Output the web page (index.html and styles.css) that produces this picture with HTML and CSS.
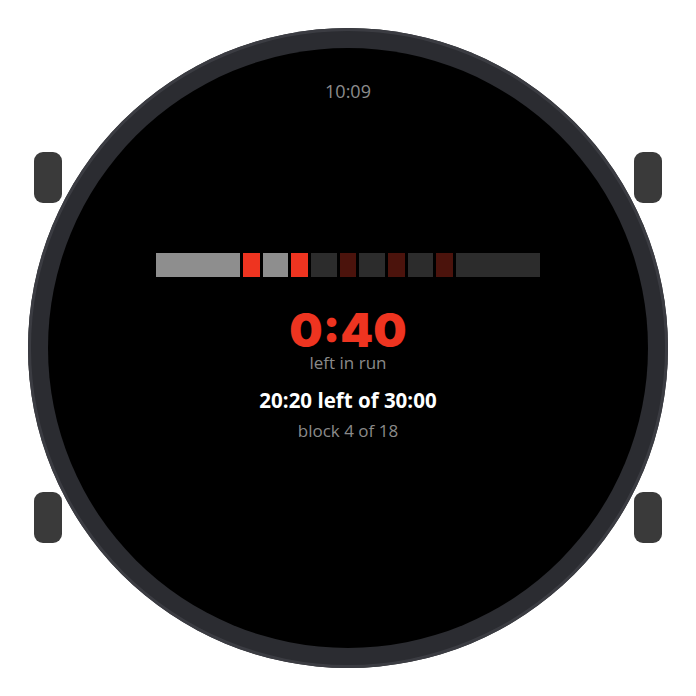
FILE: index.html
```html
<!DOCTYPE html>
<html lang="en">
<head>
<meta charset="utf-8">
<title>Interval run</title>
<link rel="stylesheet" href="styles.css">
</head>
<body>
<div class="stage">
  <div class="watch">
    <span class="btn btn-tl"></span>
    <span class="btn btn-bl"></span>
    <span class="btn btn-tr"></span>
    <span class="btn btn-br"></span>
    <div class="screen">
      <div class="clock">10:09</div>
      <div class="main">
        <div class="bar">
          <span class="seg done" style="width:84px"></span>
          <span class="seg run-done" style="width:17px"></span>
          <span class="seg done" style="width:25px"></span>
          <span class="seg run-now" style="width:17px"></span>
          <span class="seg todo" style="width:26px"></span>
          <span class="seg run-todo" style="width:16px"></span>
          <span class="seg todo" style="width:26px"></span>
          <span class="seg run-todo" style="width:17px"></span>
          <span class="seg todo" style="width:25px"></span>
          <span class="seg run-todo" style="width:17px"></span>
          <span class="seg todo" style="width:84px"></span>
        </div>
        <div class="big">0:40</div>
        <div class="sub">left in run</div>
        <div class="total">20:20 left of 30:00</div>
        <div class="sub block">block 4 of 18</div>
      </div>
    </div>
  </div>
</div>
</body>
</html>
```
FILE: styles.css
```css
html, body {
  margin: 0;
  padding: 0;
  background: #ffffff;
}
.stage {
  width: 696px;
  height: 696px;
  display: flex;
  align-items: center;
  justify-content: center;
}
.watch {
  position: relative;
  width: 640px;
  height: 640px;
  box-sizing: border-box;
  padding: 20px;
  border-radius: 50%;
  background: #2b2c31;
  box-shadow: inset 0 0 0 3px #3b3c42;
}
.btn {
  position: absolute;
  width: 28px;
  height: 51px;
  border-radius: 9px;
  background: #3a3a3a;
}
.btn-tl { left: 6px; top: 124px; }
.btn-bl { left: 6px; top: 464px; }
.btn-tr { right: 6px; top: 124px; }
.btn-br { right: 6px; top: 464px; }
.screen {
  width: 600px;
  height: 600px;
  border-radius: 50%;
  background: #000000;
  display: grid;
  grid-template-rows: 1fr auto 1fr;
  justify-items: center;
  font-family: "Open Sans", "Noto Sans", sans-serif;
  color: #8a8a8a;
}
.clock {
  align-self: start;
  margin-top: 33px;
  font-size: 18px;
  line-height: 20px;
  color: #8c8c8c;
}
.main {
  grid-row: 2;
  display: flex;
  flex-direction: column;
  align-items: center;
  margin-bottom: 3px;
}
.bar {
  display: flex;
  gap: 3px;
  height: 24px;
  margin-bottom: 30px;
}
.seg { display: block; height: 100%; }
.done { background: #8e8e8e; }
.run-done, .run-now { background: #ee3420; }
.todo { background: #2c2c2c; }
.run-todo { background: #4b130c; }
.big {
  font-family: Inter, "Open Sans", sans-serif;
  font-weight: 900;
  font-size: 47px;
  line-height: 46px;
  color: #ee3420;
}
.sub {
  font-size: 17px;
  line-height: 20px;
  color: #8a8a8a;
}
.total {
  margin-top: 15px;
  font-size: 20.5px;
  line-height: 24px;
  font-weight: 700;
  color: #ffffff;
}
.block { margin-top: 9px; }
```
